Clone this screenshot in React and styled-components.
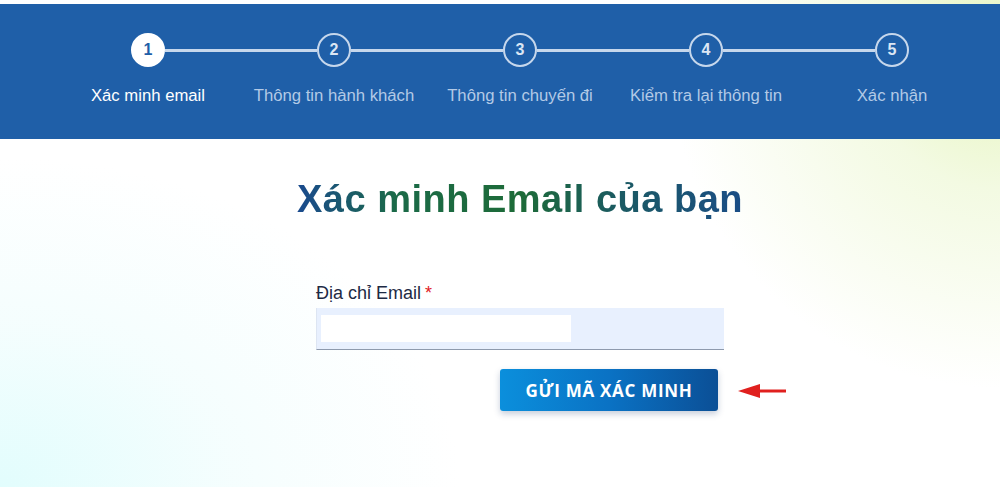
import React from "react";
import styled, { createGlobalStyle } from "styled-components";

const GlobalStyle = createGlobalStyle`
  html, body { margin: 0; padding: 0; }
  body {
    font-family: "Liberation Sans", Arial, sans-serif;
    background: #ffffff;
  }
  * { box-sizing: border-box; }
`;

const Page = styled.div`
  position: relative;
  width: 1000px;
  min-height: 487px;
  padding-top: 4px;
  overflow: hidden;
  background:
    radial-gradient(ellipse 330px 330px at 100% 12%, rgba(230, 245, 190, 1) 0%, rgba(238, 248, 214, 0.7) 40%, rgba(255, 255, 255, 0) 100%),
    radial-gradient(ellipse 460px 330px at 0% 100%, rgba(226, 253, 253, 1) 0%, rgba(238, 253, 253, 0.6) 50%, rgba(255, 255, 255, 0) 100%),
    #ffffff;
`;

const Header = styled.header`
  background: #1f5fa8;
  padding: 29px 15px 33px 55px;
`;

const Steps = styled.ol`
  list-style: none;
  margin: 0;
  padding: 0;
  display: grid;
  grid-template-columns: repeat(5, 1fr);
`;

const Step = styled.li`
  display: flex;
  flex-direction: column;
  align-items: stretch;
  gap: 19px;
`;

const Track = styled.div`
  display: flex;
  align-items: center;
  height: 34px;
`;

const HalfLine = styled.span`
  flex: 1;
  height: 3px;
  background: ${(p) => (p.$hidden ? "transparent" : "#c6d7ec")};
`;

const Circle = styled.span`
  width: 34px;
  height: 34px;
  flex: none;
  border-radius: 50%;
  display: flex;
  align-items: center;
  justify-content: center;
  font-weight: 700;
  font-size: 16px;
  border: 2px solid ${(p) => (p.$active ? "#ffffff" : "#c6d7ec")};
  background: ${(p) => (p.$active ? "#ffffff" : "#1f5fa8")};
  color: ${(p) => (p.$active ? "#1f5fa8" : "#dbe6f4")};
`;

const StepLabel = styled.span`
  text-align: center;
  font-size: 16.7px;
  line-height: 20px;
  white-space: nowrap;
  color: ${(p) => (p.$active ? "#ffffff" : "#b3cae6")};
`;

const Main = styled.main`
  padding-left: 40px;
  display: flex;
  flex-direction: column;
  align-items: center;
`;

const Title = styled.h1`
  margin: 37px 0 0;
  font-size: 38px;
  line-height: 46px;
  font-weight: 700;
  letter-spacing: 0.5px;
  background: linear-gradient(90deg, #1a4a8e 0%, #1b6a48 22%, #1d6b38 50%, #1b5a62 72%, #1a4d86 100%);
  -webkit-background-clip: text;
  background-clip: text;
  color: transparent;
`;

const Form = styled.form`
  margin-top: 60px;
  width: 408px;
  display: flex;
  flex-direction: column;
`;

const Label = styled.label`
  font-size: 18px;
  line-height: 22px;
  color: #1d2a44;
  display: flex;
  gap: 4px;
`;

const Required = styled.span`
  color: #e0201e;
`;

const InputShell = styled.div`
  margin-top: 4px;
  height: 42px;
  background: #e8f0fe;
  border-left: 1px solid #dde5f2;
  border-bottom: 1px solid #8e9aad;
  padding: 7px 4px;
  display: flex;
  align-items: stretch;
`;

const Input = styled.input`
  width: 250px;
  border: none;
  outline: none;
  background: #ffffff;
  font-family: inherit;
  font-size: 15px;
  padding: 0 8px;
`;

const Actions = styled.div`
  position: relative;
  margin-top: 19px;
  padding-right: 6px;
  display: flex;
  justify-content: flex-end;
`;

const Button = styled.button`
  width: 218px;
  height: 42px;
  border: none;
  border-radius: 3px;
  background: linear-gradient(90deg, #0b8fdc 0%, #0a72c4 50%, #0b4f96 100%);
  box-shadow: 0 3px 6px rgba(30, 60, 110, 0.25);
  color: #ffffff;
  font-family: "Open Sans", sans-serif;
  font-weight: 700;
  font-size: 17px;
  letter-spacing: 0.7px;
  cursor: pointer;
`;

const Arrow = styled.svg`
  position: absolute;
  left: 422px;
  top: 14px;
`;

const steps = [
  "Xác minh email",
  "Thông tin hành khách",
  "Thông tin chuyến đi",
  "Kiểm tra lại thông tin",
  "Xác nhận",
];

export default function App() {
  return (
    <>
      <GlobalStyle />
      <Page>
        <Header>
          <Steps>
            {steps.map((s, i) => (
              <Step key={s}>
                <Track>
                  <HalfLine $hidden={i === 0} />
                  <Circle $active={i === 0}>{i + 1}</Circle>
                  <HalfLine $hidden={i === steps.length - 1} />
                </Track>
                <StepLabel $active={i === 0}>{s}</StepLabel>
              </Step>
            ))}
          </Steps>
        </Header>
        <Main>
          <Title>Xác minh Email của bạn</Title>
          <Form onSubmit={(e) => e.preventDefault()}>
            <Label htmlFor="email">
              Địa chỉ Email<Required>*</Required>
            </Label>
            <InputShell>
              <Input id="email" type="email" />
            </InputShell>
            <Actions>
              <Button type="submit">GỬI MÃ XÁC MINH</Button>
              <Arrow width="50" height="16" viewBox="0 0 50 16">
                <path d="M18 6.5 H48 V9.5 H18 Z" fill="#e0201e" />
                <path d="M0 8 L22 1 L22 15 Z" fill="#e0201e" />
              </Arrow>
            </Actions>
          </Form>
        </Main>
      </Page>
    </>
  );
}
